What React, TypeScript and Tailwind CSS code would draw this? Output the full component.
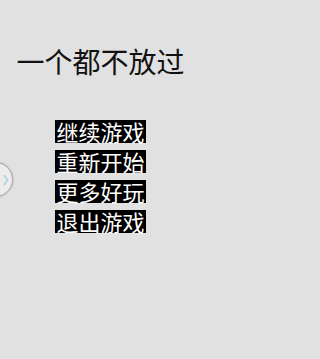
import React from "react";

const items = ["继续游戏", "重新开始", "更多好玩", "退出游戏"];

export default function App() {
  return (
    <div className="w-full min-h-[359px] bg-[#e1e1e1]">
      <div
        className="relative w-[201px] h-[359px] overflow-hidden bg-[#e1e1e1] flex flex-col items-center"
        style={{ fontFamily: '"Noto Sans CJK SC", "Noto Sans", sans-serif' }}
      >
        <div className="mt-[47px] text-[28px] leading-[28px] text-[#111111]">
          一个都不放过
        </div>
        <div className="mt-[45px] flex flex-col items-center gap-[7px]">
          {items.map((t) => (
            <div
              key={t}
              className="bg-black text-white text-[22px] leading-[23px] h-[23px] px-[1px]"
            >
              {t}
            </div>
          ))}
        </div>
        <div className="absolute left-[-22px] top-[162px] w-[35px] h-[35px] rounded-full bg-[#ececec] border-[1.5px] border-[#a8a8a8] shadow-[0_0_2px_rgba(0,0,0,0.25)]">
          <svg
            className="absolute left-[24px] top-[11px]"
            width="6"
            height="12"
            viewBox="0 0 6 12"
          >
            <path d="M1 1 L4.5 6 L1 11" fill="none" stroke="#a9d2dc" strokeWidth="1.4" />
          </svg>
        </div>
      </div>
    </div>
  );
}
